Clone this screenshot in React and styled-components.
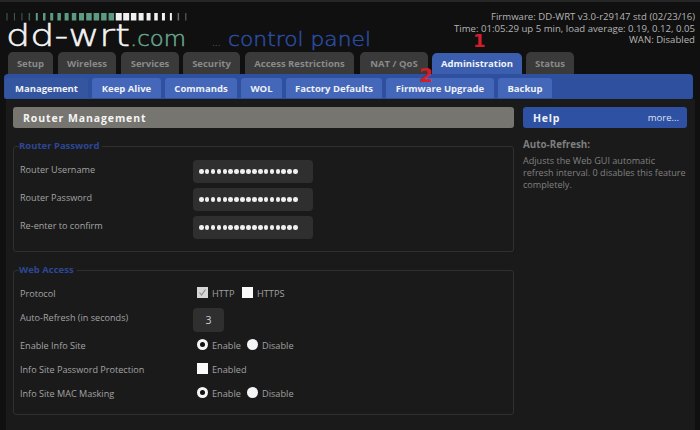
import React from 'react';
import styled, { createGlobalStyle } from 'styled-components';

const Global = createGlobalStyle`
  html, body { margin: 0; padding: 0; background: #101010; }
  body { width: 700px; height: 430px; overflow: hidden; font-family: "Open Sans", "DejaVu Sans", sans-serif; }
`;

const Page = styled.div`
  width: 700px;
  height: 430px;
  overflow: hidden;
  background: #101010;
  position: relative;
`;

const Header = styled.div`
  height: 52px;
  display: flex;
  justify-content: space-between;
  padding-right: 5px;
  box-sizing: border-box;
  border-top: 2px solid #262626;
`;

const Logo = styled.svg`
  display: block;
  width: 380px;
  height: 50px;
  flex: none;
`;

const Status = styled.div`
  font-size: 9.6px;
  line-height: 11.5px;
  color: #b4b4b4;
  text-align: right;
  margin-top: 9px;
  white-space: nowrap;
`;

const TabBar = styled.div`
  display: flex;
  align-items: flex-end;
  padding-left: 8px;
  height: 22px;
`;

const Tab = styled.div`
  width: ${p => p.$w}px;
  margin-right: ${p => p.$gap}px;
  height: ${p => (p.$active ? 21 : 22)}px;
  box-sizing: border-box;
  display: flex;
  align-items: center;
  justify-content: center;
  flex: none;
  border-radius: 5px 5px 0 0;
  font-size: 9.5px;
  font-weight: 700;
  white-space: nowrap;
  background: ${p => (p.$active ? '#3c5eae' : '#3a3a3a')};
  color: ${p => (p.$active ? '#f0f3fa' : '#8a8a8a')};
`;

const SubBar = styled.div`
  margin: 0 7px 0 4px;
  height: 25px;
  background: #2f4f9f;
  border-radius: 4px 4px 2px 2px;
  display: flex;
  padding: 4px 0 0 1px;
  box-sizing: border-box;
`;

const SubTab = styled.div`
  width: ${p => p.$w}px;
  margin-right: ${p => p.$gap}px;
  height: 20px;
  display: flex;
  align-items: center;
  justify-content: center;
  flex: none;
  border-radius: 3px 3px 0 0;
  font-size: 9.5px;
  font-weight: 700;
  white-space: nowrap;
  color: #eef1f8;
  background: ${p => (p.$active ? '#34559f' : '#4567ba')};
`;

const Main = styled.div`
  margin: 0 5px 0 6px;
  background: #1a1a1a;
  display: flex;
  padding: 8px 8px 0 7px;
  gap: 9px;
  height: 331px;
  box-sizing: border-box;
`;

const Left = styled.div`
  width: 501px;
  flex: none;
`;

const Right = styled.div`
  width: 164px;
  flex: none;
`;

const TitleBar = styled.div`
  height: 21px;
  border-radius: 3px;
  background: #77756f;
  color: #f4f4f4;
  font-size: 10.5px;
  font-weight: 700;
  letter-spacing: 0.9px;
  display: flex;
  align-items: center;
  padding: 0 10px;
  box-sizing: border-box;
`;

const Group = styled.fieldset`
  margin: 12px 0 0 0;
  padding: 8px 0 0 6px;
  height: ${p => p.$height}px;
  box-sizing: border-box;
  border: 1px solid #303030;
  border-radius: 3px;
  min-width: 0;
  display: flex;
  flex-direction: column;
  gap: ${p => p.$gap}px;
`;

const Legend = styled.legend`
  color: #2c4795;
  font-size: 9.5px;
  font-weight: 700;
  padding: 0 3px 0 0;
  margin-left: -1px;
  line-height: 12px;
`;

const Row = styled.div`
  display: flex;
  align-items: flex-start;
  color: #a4a4a4;
  font-size: 9.1px;
  line-height: 20px;
`;

const Label = styled.div`
  width: 173px;
  flex: none;
  white-space: nowrap;
`;

const Field = styled.div`
  width: 120px;
  height: 23px;
  border-radius: 4px;
  background: #2f2f2f;
  display: flex;
  align-items: center;
  padding-left: 6px;
  box-sizing: border-box;
  gap: 1.3px;
`;

const Dot = styled.span`
  width: 4.6px;
  height: 4.6px;
  border-radius: 50%;
  background: #efefef;
  flex: none;
`;

const NumField = styled.div`
  width: 31px;
  height: 24px;
  border-radius: 4px;
  background: #2f2f2f;
  color: #d0d0d0;
  font-size: 10.5px;
  display: flex;
  align-items: center;
  justify-content: center;
`;

const Options = styled.div`
  display: flex;
  align-items: center;
  height: 20px;
  margin-left: 4px;
`;

const Box = styled.span`
  width: 11px;
  height: 11px;
  flex: none;
  background: ${p => (p.$checked ? '#d6d6d6' : '#fafafa')};
  display: inline-flex;
  align-items: center;
  justify-content: center;
  margin-right: 4px;
  margin-top: -3px;
  svg { display: block; }
`;

const Radio = styled.span`
  width: 11px;
  height: 11px;
  flex: none;
  border-radius: 50%;
  background: #f5f5f5;
  margin-right: 4px;
  margin-top: -3px;
  display: inline-flex;
  align-items: center;
  justify-content: center;
  &::after {
    content: '';
    width: 5px;
    height: 5px;
    border-radius: 50%;
    background: ${p => (p.$on ? '#101010' : 'transparent')};
  }
`;

const OptText = styled.span`
  width: ${p => p.$w}px;
  flex: none;
  font-size: 9.2px;
  color: #a0a0a0;
  white-space: nowrap;
`;

const HelpBar = styled.div`
  height: 21px;
  border-radius: 3px;
  background: #2f51a3;
  color: #eef1f8;
  display: flex;
  align-items: center;
  justify-content: space-between;
  padding: 0 8px 0 10px;
  box-sizing: border-box;
  font-size: 10.5px;
  font-weight: 700;
  letter-spacing: 0.8px;
`;

const More = styled.span`
  font-size: 9.5px;
  font-weight: 400;
  letter-spacing: 0;
  color: #dde3f2;
`;

const HelpTitle = styled.div`
  margin-top: 11px;
  font-size: 9.8px;
  font-weight: 700;
  color: #7e7e7e;
  line-height: 12px;
`;

const HelpText = styled.div`
  margin-top: 4px;
  font-size: 9.1px;
  color: #808080;
  line-height: 12px;
  white-space: nowrap;
`;

const Mark = styled.span`
  position: absolute;
  font-family: "DejaVu Sans", sans-serif;
  font-weight: 700;
  font-size: ${p => p.$size}px;
  line-height: 1;
  color: #cf1f2a;
  left: ${p => p.$x}px;
  top: ${p => p.$y}px;
`;

const mainTabs = [
  ['Setup', 45, 5], ['Wireless', 58, 5], ['Services', 58, 4], ['Security', 57, 5],
  ['Access Restrictions', 109, 6], ['NAT / QoS', 68, 4], ['Administration', 90, 4, true], ['Status', 48, 0],
];
const subTabs = [
  ['Management', 83, 4, true], ['Keep Alive', 69, 4], ['Commands', 72, 4], ['WOL', 41, 4],
  ['Factory Defaults', 96, 4], ['Firmware Upgrade', 108, 4], ['Backup', 54, 0],
];

const Secret = () => (
  <Field>
    {Array.from({ length: 17 }).map((_, i) => <Dot key={i} />)}
  </Field>
);

const barWidths = [1, 1, 1, 1.5, 2, 2.5, 3, 3.5, 4, 4.5, 5, 5.5, 5.5, 5.5, 5.5, 6, 6, 5.5, 5, 4, 3.5, 3, 2, 1.5, 1];
const barColor = i => {
  if (i < 4) return '#3f5f52';
  if (i < 15) return '#5d9a82';
  if (i < 23) return '#f0f0f0';
  return '#6a6a6a';
};

export default function App() {
  return (
    <Page>
      <Global />
      <Header>
        <Logo viewBox="0 0 380 50">
          {barWidths.map((w, i) => (
            <rect key={i} x={7 + i * 7.45 - w / 2} y="11" width={w} height="7.5" fill={barColor(i)} />
          ))}
          <text x="6" y="43.5" fontFamily="DejaVu Sans" fontWeight="200" fontSize="30" fill="#f4f4f4" stroke="#f4f4f4" strokeWidth="0.5" textLength="124" lengthAdjust="spacingAndGlyphs">dd-wrt</text>
          <text x="130" y="44" fontFamily="DejaVu Sans" fontWeight="200" fontSize="21" fill="#68a68d" stroke="#68a68d" strokeWidth="0.5" textLength="56" lengthAdjust="spacingAndGlyphs">.com</text>
          <text x="212" y="44" fontFamily="DejaVu Sans" fontSize="9" fill="#4d5a52">...</text>
          <text x="228" y="44" fontFamily="DejaVu Sans" fontWeight="200" fontSize="19" fill="#2c4fa8" stroke="#2c4fa8" strokeWidth="0.4" textLength="143" lengthAdjust="spacingAndGlyphs">control panel</text>
        </Logo>
        <Status>
          <div>Firmware: DD-WRT v3.0-r29147 std (02/23/16)</div>
          <div>Time: 01:05:29 up 5 min, load average: 0.19, 0.12, 0.05</div>
          <div>WAN: Disabled</div>
        </Status>
      </Header>
      <TabBar>
        {mainTabs.map(([t, w, gap, active]) => <Tab key={t} $w={w} $gap={gap} $active={active}>{t}</Tab>)}
      </TabBar>
      <SubBar>
        {subTabs.map(([t, w, gap, active]) => <SubTab key={t} $w={w} $gap={gap} $active={active}>{t}</SubTab>)}
      </SubBar>
      <Main>
        <Left>
          <TitleBar>Router Management</TitleBar>
          <Group $height={112} $gap={5}>
            <Legend>Router Password</Legend>
            <Row><Label>Router Username</Label><Secret /></Row>
            <Row><Label>Router Password</Label><Secret /></Row>
            <Row><Label>Re-enter to confirm</Label><Secret /></Row>
          </Group>
          <Group $height={151} $gap={4}>
            <Legend>Web Access</Legend>
            <Row>
              <Label>Protocol</Label>
              <Options>
                <Box $checked>
                  <svg width="9" height="9" viewBox="0 0 9 9"><path d="M1.5 4.5 L3.5 7 L7.5 1.5" fill="none" stroke="#8f8f8f" strokeWidth="1.2" /></svg>
                </Box>
                <OptText $w={30}>HTTP</OptText>
                <Box />
                <OptText>HTTPS</OptText>
              </Options>
            </Row>
            <Row><Label>Auto-Refresh (in seconds)</Label><NumField>3</NumField></Row>
            <Row>
              <Label>Enable Info Site</Label>
              <Options><Radio $on /><OptText $w={35}>Enable</OptText><Radio /><OptText>Disable</OptText></Options>
            </Row>
            <Row>
              <Label>Info Site Password Protection</Label>
              <Options><Box /><OptText>Enabled</OptText></Options>
            </Row>
            <Row>
              <Label>Info Site MAC Masking</Label>
              <Options><Radio $on /><OptText $w={35}>Enable</OptText><Radio /><OptText>Disable</OptText></Options>
            </Row>
          </Group>
        </Left>
        <Right>
          <HelpBar>Help<More>more...</More></HelpBar>
          <HelpTitle>Auto-Refresh:</HelpTitle>
          <HelpText>Adjusts the Web GUI automatic<br />refresh interval. 0 disables this feature<br />completely.</HelpText>
        </Right>
      </Main>
      <Mark $x={473} $y={32} $size={18}>1</Mark>
      <Mark $x={419} $y={65} $size={20}>2</Mark>
    </Page>
  );
}
